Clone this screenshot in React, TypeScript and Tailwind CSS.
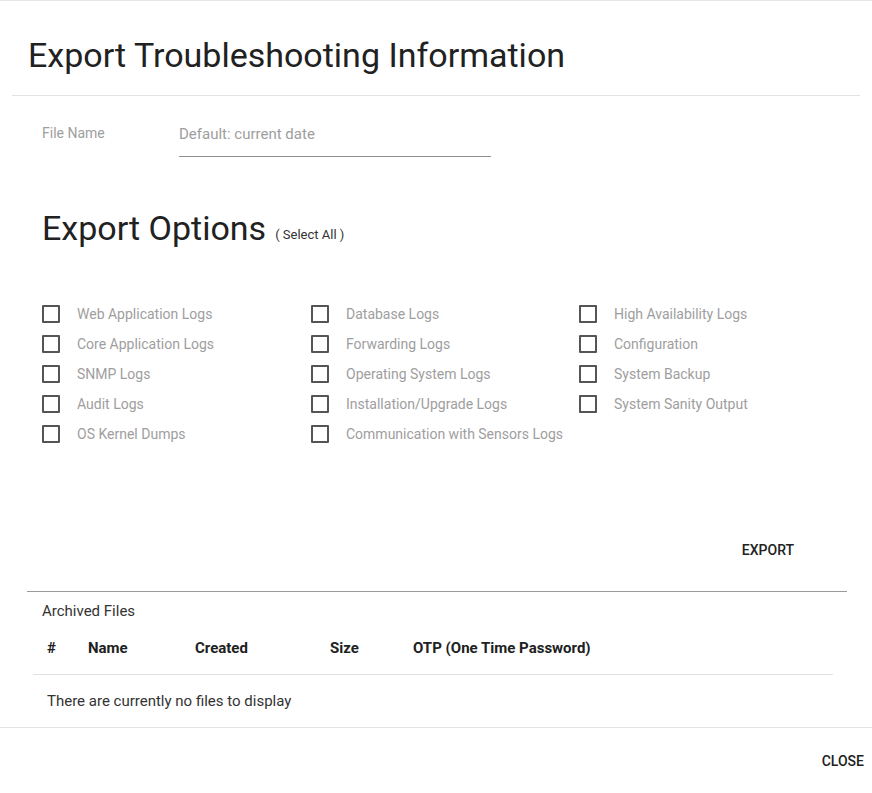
const col1 = ['Web Application Logs', 'Core Application Logs', 'SNMP Logs', 'Audit Logs', 'OS Kernel Dumps']
const col2 = ['Database Logs', 'Forwarding Logs', 'Operating System Logs', 'Installation/Upgrade Logs', 'Communication with Sensors Logs']
const col3 = ['High Availability Logs', 'Configuration', 'System Backup', 'System Sanity Output']

function Option({ label }: { label: string }) {
	return (
		<label className="flex items-center h-[30px]">
			<span className="w-[18px] h-[18px] border-2 border-[#555] rounded-[1px] shrink-0" />
			<span className="ml-[17px] text-[14px] text-[#9e9e9e]">{label}</span>
		</label>
	)
}

export default function App() {
	return (
		<div className="w-[872px] h-[793px] bg-white text-[#212121] font-['Roboto',sans-serif] flex flex-col border-t border-[#e6e6e6]">
			{/* Заголовок */}
			<div className="mx-[12px] border-b border-[#e3e3e3] h-[95px] flex items-center px-[16px]">
				<h1 className="text-[34px] font-normal leading-none text-[#212121] mt-[14px]">Export Troubleshooting Information</h1>
			</div>

			{/* Имя файла */}
			<div className="flex items-start pl-[42px] pt-[28px]">
				<div className="w-[137px] text-[14px] text-[#9e9e9e] leading-[16px] mt-[1px]">File Name</div>
				<div className="w-[312px] border-b border-[#8f8f8f] pb-[14px] text-[15px] text-[#9e9e9e] leading-[16px] mt-[2px]">
					Default: current date
				</div>
			</div>

			{/* Опции */}
			<div className="pl-[42px] mt-[51px] flex items-end">
				<h2 className="text-[34px] font-normal leading-[40px] text-[#212121]">Export Options</h2>
				<span className="ml-[9px] mb-[4px] text-[13px] text-[#333]">( Select All )</span>
			</div>

			<div className="grid grid-cols-[269px_268px_260px] pl-[42px] mt-[51px]">
				<div>{col1.map(l => <Option key={l} label={l} />)}</div>
				<div>{col2.map(l => <Option key={l} label={l} />)}</div>
				<div>{col3.map(l => <Option key={l} label={l} />)}</div>
			</div>

			<div className="flex justify-end pr-[78px] mt-[93px]">
				<button className="text-[14px] font-medium text-[#212121] leading-[16px]">EXPORT</button>
			</div>

			{/* Архив */}
			<div className="mx-[27px] w-[820px] mt-[33px] border-t border-[#9a9a9a]">
				<div className="pl-[15px] pt-[10px] text-[15px] text-[#333] leading-[18px]">Archived Files</div>
				<div className="mx-[6px] w-[800px] mt-[17px] border-b border-[#e0e0e0] flex text-[15px] font-bold text-[#212121] h-[38px] items-start pl-[14px]">
					<span className="w-[41px]">#</span>
					<span className="w-[107px]">Name</span>
					<span className="w-[135px]">Created</span>
					<span className="w-[83px]">Size</span>
					<span>OTP (One Time Password)</span>
				</div>
				<div className="pl-[20px] pt-[17px] text-[15px] text-[#333] leading-[18px]">There are currently no files to display</div>
			</div>

			<div className="mt-[17px] border-t border-[#e3e3e3] flex justify-end pr-[8px] pt-[25px]">
				<button className="text-[14px] font-medium text-[#212121] leading-[16px]">CLOSE</button>
			</div>
		</div>
	)
}
